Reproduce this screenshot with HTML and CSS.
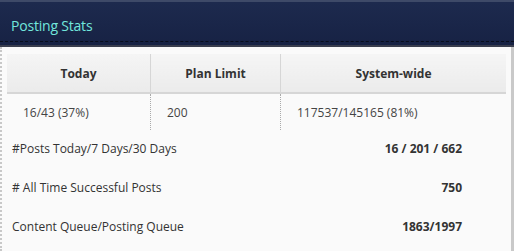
FILE: index.html
```html
<!DOCTYPE html>
<html lang="en">
<head>
  <meta charset="UTF-8" />
  <title>Posting Stats</title>
  <link rel="stylesheet" href="styles.css">
</head>
<body>
  <div class="panel">
    <div class="panel-head">
      <h2>Posting Stats</h2>
    </div>

    <div class="panel-body">
      <table class="usage">
        <thead>
          <tr>
            <th class="col-today">Today</th>
            <th class="col-plan">Plan Limit</th>
            <th>System-wide</th>
          </tr>
        </thead>
        <tbody>
          <tr>
            <td>16/43 (37%)</td>
            <td>200</td>
            <td>117537/145165 (81%)</td>
          </tr>
        </tbody>
      </table>

      <div class="stats">
        <div class="stat-row">
          <span>#Posts Today/7 Days/30 Days</span>
          <b>16 / 201 / 662</b>
        </div>
        <div class="stat-row">
          <span># All Time Successful Posts</span>
          <b>750</b>
        </div>
        <div class="stat-row">
          <span>Content Queue/Posting Queue</span>
          <b>1863/1997</b>
        </div>
      </div>
    </div>
  </div>
</body>
</html>
```

FILE: styles.css
```css
body {
  margin: 0;
  font-family: 'Open Sans', 'Noto Sans', sans-serif;
  background: #fafafa;
  color: #333;
}

.panel {
  width: 514px;
  height: 251px;
  box-sizing: border-box;
  background: #fafafa;
  overflow: hidden;
}

.panel-head {
  height: 47px;
  box-sizing: border-box;
  background: linear-gradient(#1d2a4e, #172244);
  border-top: 2px solid #3e4a68;
  border-bottom: 2px solid #3a3e4e;
  position: relative;
}

.panel-head::after {
  content: "";
  position: absolute;
  left: 0;
  right: 0;
  bottom: 3px;
  border-bottom: 1px dashed #0a0f1c;
}

.panel-head h2 {
  margin: 0;
  padding: 14px 0 0 11px;
  font-size: 14px;
  font-weight: normal;
  letter-spacing: -0.2px;
  color: #72e6dc;
}

.panel-body {
  border-left: 2px dotted #c8c8c8;
  border-right: 3px solid #c9c9c9;
  height: 204px;
  box-sizing: border-box;
  padding: 7px 6px 0 5px;
}

.usage {
  width: 499px;
  border-collapse: collapse;
  font-size: 12px;
}

.usage th {
  height: 38px;
  background: linear-gradient(#f5f5f5, #ebebeb);
  border-bottom: 2px solid #d6d6d6;
  border-left: 1px solid #d6d6d6;
  font-weight: bold;
  color: #333;
  padding: 0;
}

.usage th:first-child,
.usage td:first-child {
  border-left: none;
}

.col-today { width: 143px; }
.col-plan { width: 129px; }

.usage td {
  height: 36px;
  padding: 0 0 0 16px;
  border-left: 1px dotted #aaa;
  color: #444;
  background: #fafafa;
}

.stats {
  margin-top: -1px;
  padding: 0 43px 0 5px;
  font-size: 12px;
}

.stat-row {
  display: flex;
  justify-content: space-between;
  height: 39px;
  align-items: center;
  color: #333;
}

.stat-row b {
  font-weight: bold;
}
```
